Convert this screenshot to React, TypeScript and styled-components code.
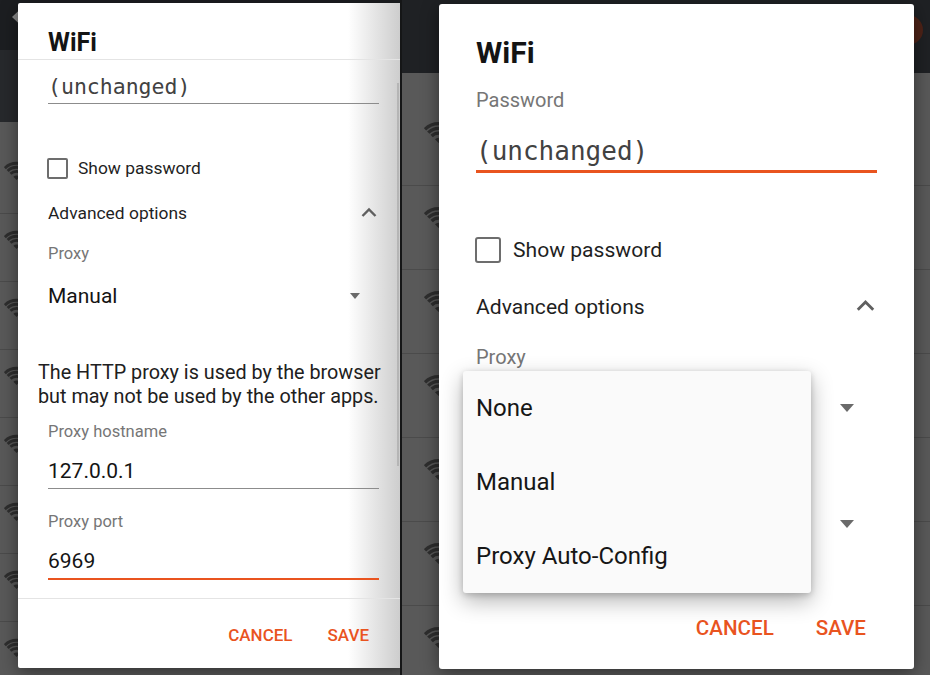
import React from 'react';
import styled, { createGlobalStyle, ThemeProvider } from 'styled-components';

type Sizes = {
  pad: number;
  title: number;
  body: number;
  label: number;
  value: number;
  mono: number;
  button: number;
  check: number;
  checkBorder: number;
  checkGap: number;
  caretW: number;
  caretH: number;
  caretRight: number;
  focusLine: number;
  btnGap: number;
  btnRight: number;
  radius: number;
};

declare module 'styled-components' {
  export interface DefaultTheme extends Sizes {}
}

const small: Sizes = {
  pad: 30,
  title: 25,
  body: 17.4,
  label: 16.5,
  value: 21,
  mono: 21.5,
  button: 17,
  check: 21,
  checkBorder: 2,
  checkGap: 10,
  caretW: 11,
  caretH: 6,
  caretRight: 19,
  focusLine: 2,
  btnGap: 35,
  btnRight: 40,
  radius: 2,
};

const large: Sizes = {
  pad: 37,
  title: 30,
  body: 21.1,
  label: 20,
  value: 24,
  mono: 26,
  button: 20.6,
  check: 26,
  checkBorder: 2.5,
  checkGap: 12,
  caretW: 14,
  caretH: 8,
  caretRight: 23,
  focusLine: 3,
  btnGap: 42,
  btnRight: 48,
  radius: 3,
};

const ORANGE = '#e9541f';

const GlobalStyle = createGlobalStyle`
  html, body {
    margin: 0;
    padding: 0;
  }
  body {
    width: 930px;
    height: 675px;
    overflow: hidden;
    background: #151617;
    font-family: Roboto, "Noto Sans", "Liberation Sans", sans-serif;
  }
`;

const Page = styled.div`
  display: flex;
  gap: 2px;
  width: 930px;
  height: 675px;
`;

const Screen = styled.div<{ $w: number }>`
  display: grid;
  width: ${p => p.$w}px;
  height: 675px;
  overflow: hidden;
  flex-shrink: 0;
  & > * {
    grid-area: 1 / 1;
  }
`;

// the app behind the dialog (dimmed by the scrim)
const Backdrop = styled.div`
  display: flex;
  flex-direction: column;
  background: #595959;
`;

const TopBar = styled.div<{ $h: number; $bg: string }>`
  height: ${p => p.$h}px;
  background: ${p => p.$bg};
  display: flex;
  align-items: flex-start;
  justify-content: space-between;
  flex-shrink: 0;
`;

const BackArrow = styled.svg`
  margin: 9px 0 0 11px;
`;

const AvatarDot = styled.span`
  width: 30px;
  height: 30px;
  border-radius: 50%;
  background: #4f2317;
  margin: 15px 7px 0 auto;
`;

const List = styled.div<{ $top: number }>`
  flex: 1;
  padding-top: ${p => p.$top}px;
  background: #595959;
`;

const ListRow = styled.div<{ $h: number; $iconTop: number; $left: number }>`
  height: ${p => p.$h}px;
  box-sizing: border-box;
  border-top: 1px solid #4b4b4b;
  padding: ${p => p.$iconTop}px 0 0 ${p => p.$left}px;
  &:first-child {
    border-top: none;
  }
`;

const NavBar = styled.div<{ $h: number }>`
  height: ${p => p.$h}px;
  background: #2a2a2a;
  flex-shrink: 0;
`;

const Dialog = styled.div<{ $x: number; $y: number; $w: number; $h: number; $fade?: boolean }>`
  align-self: start;
  justify-self: start;
  margin: ${p => p.$y}px 0 0 ${p => p.$x}px;
  width: ${p => p.$w}px;
  height: ${p => p.$h}px;
  background: ${p => (p.$fade ? 'linear-gradient(90deg, #fff 0, #fff 330px, #cdcdcd 382px)' : '#fff')};
  border-radius: ${p => p.theme.radius}px;
  box-shadow: 0 4px 18px rgba(0, 0, 0, 0.45);
  display: flex;
  flex-direction: column;
  position: relative;
`;

const Header = styled.h2<{ $top: number; $lh: number; $divider?: boolean }>`
  margin: 0;
  padding: ${p => p.$top}px ${p => p.theme.pad}px ${p => (p.$divider ? 1 : 0)}px;
  font-size: ${p => p.theme.title}px;
  line-height: ${p => p.$lh}px;
  font-weight: 700;
  color: #141414;
  border-bottom: ${p => (p.$divider ? '1px solid #e4e4e4' : 'none')};
`;

const Body = styled.div`
  display: flex;
  flex-direction: column;
  padding: 0 ${p => p.theme.pad}px;
`;

const Label = styled.div<{ $mt: number; $lh: number }>`
  margin-top: ${p => p.$mt}px;
  line-height: ${p => p.$lh}px;
  font-size: ${p => p.theme.label}px;
  color: #767676;
`;

const Field = styled.div<{ $mt: number; $lh: number; $pb: number; $focus?: boolean; $mono?: boolean }>`
  margin-top: ${p => p.$mt}px;
  line-height: ${p => p.$lh}px;
  padding-bottom: ${p => p.$pb}px;
  font-family: ${p => (p.$mono ? '"DejaVu Sans Mono", "Liberation Mono", monospace' : 'Roboto, sans-serif')};
  font-size: ${p => (p.$mono ? p.theme.mono : p.theme.value)}px;
  color: ${p => (p.$mono ? '#424242' : '#141414')};
  border-bottom: ${p => (p.$focus ? `${p.theme.focusLine}px solid ${ORANGE}` : '1px solid #8c8c8c')};
  white-space: pre;
`;

const CheckRow = styled.div<{ $mt: number; $h: number }>`
  margin: ${p => p.$mt}px 0 0 -1px;
  height: ${p => p.$h}px;
  display: flex;
  align-items: center;
  gap: ${p => p.theme.checkGap}px;
  font-size: ${p => p.theme.body}px;
  color: #1f1f1f;
`;

const CheckBox = styled.span`
  width: ${p => p.theme.check}px;
  height: ${p => p.theme.check}px;
  box-sizing: border-box;
  border: ${p => p.theme.checkBorder}px solid #6d6d6d;
  border-radius: ${p => p.theme.radius}px;
`;

const ExpandRow = styled.div<{ $h: number }>`
  height: ${p => p.$h}px;
  display: flex;
  align-items: center;
  justify-content: space-between;
  font-size: ${p => p.theme.body}px;
  color: #1f1f1f;
`;

const Chevron = styled.svg`
  margin-right: 2px;
`;

// spinner row; the value may sit under an open menu, then only the caret shows
const SelectRow = styled.div<{ $h: number; $mt?: number }>`
  margin-top: ${p => p.$mt || 0}px;
  height: ${p => p.$h}px;
  display: flex;
  align-items: center;
  justify-content: space-between;
  font-size: ${p => p.theme.value}px;
  color: #141414;
`;

const Caret = styled.span`
  width: 0;
  height: 0;
  margin-left: auto;
  border-left: ${p => p.theme.caretW / 2}px solid transparent;
  border-right: ${p => p.theme.caretW / 2}px solid transparent;
  border-top: ${p => p.theme.caretH}px solid #6a6a6a;
  margin-right: ${p => p.theme.caretRight}px;
`;

const Help = styled.p<{ $mt: number }>`
  margin: ${p => p.$mt}px 0 0 -10px;
  font-size: 19.8px;
  line-height: 24px;
  color: #202020;
  white-space: nowrap;
`;

const Footer = styled.div<{ $h: number; $divider?: boolean }>`
  margin-top: auto;
  height: ${p => p.$h}px;
  box-sizing: border-box;
  border-top: ${p => (p.$divider ? '1px solid #e4e4e4' : 'none')};
  padding: ${p => (p.$divider ? 2 : 0)}px ${p => p.theme.btnRight}px 0 0;
  display: flex;
  align-items: center;
  justify-content: flex-end;
  gap: ${p => p.theme.btnGap}px;
`;

const FlatButton = styled.button`
  border: 0;
  background: none;
  padding: 0;
  font-family: Roboto, sans-serif;
  font-weight: 500;
  font-size: ${p => p.theme.button}px;
  color: ${ORANGE};
  text-transform: uppercase;
`;

const ScrollThumb = styled.div`
  position: absolute;
  left: 379px;
  top: 80px;
  width: 2px;
  height: 383px;
  background: rgba(0, 0, 0, 0.12);
`;

const Menu = styled.ul`
  position: absolute;
  left: 24px;
  top: 367px;
  width: 348px;
  margin: 0;
  padding: 0;
  list-style: none;
  background: #fafafa;
  border-radius: 3px;
  box-shadow: 0 8px 22px rgba(0, 0, 0, 0.3), 0 2px 6px rgba(0, 0, 0, 0.18);
`;

const MenuItem = styled.li`
  height: 74px;
  display: flex;
  align-items: center;
  padding-left: 13px;
  font-size: 24px;
  color: #161616;
`;

const WifiIcon = ({ scale }: { scale: number }) => {
  const k = 0.7071;
  const arc = (r: number) => `M${14 - r * k} ${21 - r * k} A${r} ${r} 0 0 1 ${14 + r * k} ${21 - r * k}`;
  return (
    <svg width={28 * scale} height={22 * scale} viewBox="0 0 28 22">
      <path d={`M14 21 L${14 - 5 * k} ${21 - 5 * k} A5 5 0 0 1 ${14 + 5 * k} ${21 - 5 * k} Z`} fill="#2e2e2e" />
      {[9.5, 14, 18.5].map(r => (
        <path key={r} d={arc(r)} fill="none" stroke="#2e2e2e" strokeWidth={3.2} />
      ))}
    </svg>
  );
};

const ChevronUp = ({ w }: { w: number }) => (
  <Chevron width={w} height={w * 0.69} viewBox="0 0 16 11">
    <path d="M1.5 9 L8 2.5 L14.5 9" fill="none" stroke="#5f5f5f" strokeWidth={2.4} />
  </Chevron>
);

function ScrolledDialog() {
  return (
    <ThemeProvider theme={small}>
      <Screen $w={400}>
        <Backdrop>
          <TopBar $h={50} $bg="#1c1e21">
            <BackArrow width={18} height={16} viewBox="0 0 18 16">
              <path d="M9 0.5 L1 8 L9 15.5 Z" fill="#8a8a8a" />
              <path d="M4 8 H17" stroke="#8a8a8a" strokeWidth={2.5} />
            </BackArrow>
          </TopBar>
          <TopBar $h={72} $bg="#27292c" />
          <List $top={23}>
            {[0, 1, 2, 3, 4, 5, 6, 7].map(i => (
              <ListRow key={i} $h={68} $iconTop={16} $left={4}>
                <WifiIcon scale={0.9} />
              </ListRow>
            ))}
          </List>
          <NavBar $h={7} />
        </Backdrop>

        <Dialog $x={18} $y={3} $w={391} $h={665} $fade>
          <Header $top={24} $lh={31} $divider>WiFi</Header>
          <Body>
            <Field $mono $mt={14} $lh={26} $pb={3}>(unchanged)</Field>
            <CheckRow $mt={44} $h={40}>
              <CheckBox />
              Show password
            </CheckRow>
            <ExpandRow $h={49}>
              Advanced options
              <ChevronUp w={16} />
            </ExpandRow>
            <Label $mt={0} $lh={34}>Proxy</Label>
            <SelectRow $h={49}>
              Manual
              <Caret />
            </SelectRow>
            <Help $mt={41}>
              The HTTP proxy is used by the browser
              <br />
              but may not be used by the other apps.
            </Help>
            <Label $mt={10.5} $lh={24}>Proxy hostname</Label>
            <Field $mt={13.5} $lh={28} $pb={3}>127.0.0.1</Field>
            <Label $mt={20.5} $lh={24}>Proxy port</Label>
            <Field $mt={13} $lh={28} $pb={3.5} $focus>6969</Field>
          </Body>
          <Footer $h={70} $divider>
            <FlatButton>Cancel</FlatButton>
            <FlatButton>Save</FlatButton>
          </Footer>
          <ScrollThumb />
        </Dialog>
      </Screen>
    </ThemeProvider>
  );
}

function MenuDialog() {
  return (
    <ThemeProvider theme={large}>
      <Screen $w={528}>
        <Backdrop>
          <TopBar $h={73} $bg="#1f2124">
            <AvatarDot />
          </TopBar>
          <List $top={28}>
            {[0, 1, 2, 3, 4, 5, 6].map(i => (
              <ListRow key={i} $h={84} $iconTop={20} $left={22}>
                <WifiIcon scale={1.05} />
              </ListRow>
            ))}
          </List>
          <NavBar $h={6} />
        </Backdrop>

        <Dialog $x={37} $y={4} $w={475} $h={665}>
          <Header $top={31} $lh={36}>WiFi</Header>
          <Body>
            <Label $mt={15.5} $lh={26}>Password</Label>
            <Field $mono $focus $mt={22} $lh={32} $pb={3.5}>(unchanged)</Field>
            <CheckRow $mt={52.5} $h={48}>
              <CheckBox />
              Show password
            </CheckRow>
            <ExpandRow $h={65}>
              Advanced options
              <ChevronUp w={19} />
            </ExpandRow>
            <Label $mt={5.5} $lh={26}>Proxy</Label>
            {/* proxy and IP-settings spinners lie under the open menu */}
            <SelectRow $h={76}>
              <Caret />
            </SelectRow>
            <SelectRow $h={76} $mt={40}>
              <Caret />
            </SelectRow>
          </Body>
          <Footer $h={83}>
            <FlatButton>Cancel</FlatButton>
            <FlatButton>Save</FlatButton>
          </Footer>

          <Menu>
            <MenuItem>None</MenuItem>
            <MenuItem>Manual</MenuItem>
            <MenuItem>Proxy Auto-Config</MenuItem>
          </Menu>
        </Dialog>
      </Screen>
    </ThemeProvider>
  );
}

export default function App() {
  return (
    <>
      <GlobalStyle />
      <Page>
        <ScrolledDialog />
        <MenuDialog />
      </Page>
    </>
  );
}
